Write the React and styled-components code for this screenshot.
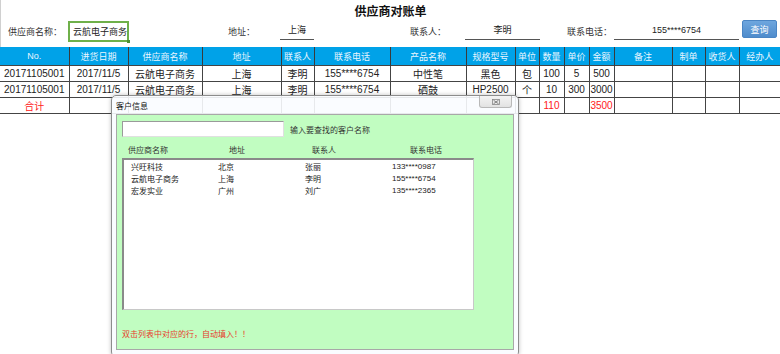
import React from "react";
import styled, { createGlobalStyle } from "styled-components";

const Global = createGlobalStyle`
  html, body { margin: 0; padding: 0; background: #fff; }
  body { font-family: "Liberation Sans", "Noto Sans CJK SC", sans-serif; color: #222; }
`;

const Page = styled.div`
  position: relative;
  width: 780px;
  height: 354px;
  overflow: hidden;
  background: #fff;
`;

const Top = styled.div`
  height: 47px;
  border-left: 1px solid #d0d0d0;
  box-sizing: border-box;
`;

const Title = styled.div`
  height: 20px;
  display: flex;
  align-items: center;
  justify-content: center;
  padding-top: 1px;
  box-sizing: border-box;
  font-size: 12px;
  font-weight: bold;
  color: #111;
`;

const FormRow = styled.div`
  display: grid;
  grid-template-columns: 7px 60px 61px 99px 52px 34px 96px 55px 75px 27px 47px 125px 3px 35px;
  height: 22px;
  align-items: center;
  font-size: 9px;
  color: #333;
`;

const Label = styled.span`
  grid-column: ${(p) => p.col};
  white-space: nowrap;
`;

const GreenInput = styled.div`
  grid-column: 3;
  position: relative;
  height: 21px;
  box-sizing: border-box;
  border: 2px solid #6fb04a;
  display: flex;
  align-items: center;
  padding-left: 3px;
  color: #222;
  white-space: nowrap;
  &::after {
    content: "";
    position: absolute;
    right: -3px;
    bottom: -3px;
    width: 3px;
    height: 3px;
    background: #4f8f33;
  }
`;

const LineField = styled.div`
  grid-column: ${(p) => p.col};
  align-self: start;
  height: 20px;
  box-sizing: border-box;
  border-bottom: 1px solid #555;
  display: flex;
  align-items: center;
  justify-content: center;
  color: #222;
  white-space: nowrap;
`;

const QueryButton = styled.button`
  grid-column: 14;
  align-self: start;
  height: 18px;
  padding: 0;
  border: 1px solid #4a85c4;
  border-radius: 2px;
  background: linear-gradient(#6ea6de, #4f8ccc);
  color: #fff;
  font-family: inherit;
  font-size: 9px;
`;

const Table = styled.table`
  border-collapse: collapse;
  table-layout: fixed;
  width: 780px;
`;

const HeadCell = styled.th`
  height: 18px;
  padding: 0;
  background: #00a2e8;
  color: #eaf6ff;
  font-weight: normal;
  font-size: 9px;
  border-left: 1px solid #3a3a3a;
  border-right: 1px solid #3a3a3a;
  &:first-child { border-left: none; }
  &:last-child { border-right: none; }
  white-space: nowrap;
  overflow: hidden;
`;

const Cell = styled.td`
  height: ${(p) => p.h || 14}px;
  padding: 0;
  text-align: center;
  font-size: 10px;
  color: ${(p) => (p.red ? "#ff2020" : "#222")};
  border: 1px solid #444;
  &:first-child { border-left: none; }
  &:last-child { border-right: none; }
  white-space: nowrap;
  overflow: hidden;
`;

const Dialog = styled.div`
  position: absolute;
  left: 111px;
  top: 95px;
  width: 408px;
  height: 262px;
  box-sizing: border-box;
  border: 1px solid #8c8c8c;
  border-radius: 5px;
  background: rgba(250, 252, 255, 0.9);
  box-shadow: 0 0 4px rgba(0, 0, 0, 0.25);
  display: flex;
  flex-direction: column;
  padding: 0 4px;
`;

const TitleBar = styled.div`
  height: 18px;
  display: flex;
  align-items: center;
  justify-content: space-between;
  font-size: 8px;
  color: #111;
`;

const CloseBtn = styled.div`
  width: 31px;
  height: 11px;
  margin-top: -6px;
  margin-right: 2px;
  border: 1px solid #b8b8b8;
  border-top: none;
  border-radius: 0 0 3px 3px;
  background: linear-gradient(#f4f4f4, #e2e2e2);
  display: flex;
  align-items: center;
  justify-content: center;
`;

const Body = styled.div`
  background: #c1fdc1;
  border: 1px solid #a8a8a8;
  height: 236px;
  box-sizing: border-box;
  display: flex;
  flex-direction: column;
  padding: 6px 0 0 5px;
  font-size: 8px;
  color: #333;
`;

const SearchRow = styled.div`
  display: flex;
  align-items: center;
  gap: 6px;
`;

const SearchInput = styled.div`
  width: 162px;
  height: 16px;
  box-sizing: border-box;
  background: #fff;
  border: 1px solid #9a9a9a;
  border-right-color: #e0e0e0;
  border-bottom-color: #e0e0e0;
`;

const ColumnHeads = styled.div`
  display: grid;
  grid-template-columns: 101px 83px 98px auto;
  padding-left: 6px;
  margin-top: 4px;
  height: 17px;
  align-items: center;
  color: #333;
`;

const ListBox = styled.div`
  width: 352px;
  height: 152px;
  box-sizing: border-box;
  background: #fff;
  border: 1px solid #c8c8c8;
  border-top: 2px solid #8a8a8a;
  border-left: 2px solid #8a8a8a;
  padding-top: 0;
`;

const ListRow = styled.div`
  display: grid;
  grid-template-columns: 87px 87px 87px auto;
  padding-left: 7px;
  height: 12px;
  align-items: center;
  color: #222;
  white-space: nowrap;
`;

const Hint = styled.div`
  margin-top: 18px;
  color: #e83a2a;
  font-size: 8px;
`;

const cols = [69, 59, 74, 79, 33, 76, 76, 49, 24, 25, 25, 25, 58, 33, 34, 41];
const heads = ["No.", "进货日期", "供应商名称", "地址", "联系人", "联系电话", "产品名称", "规格型号", "单位", "数量", "单价", "金额", "备注", "制单", "收货人", "经办人"];
const rows = [
  ["20171105001", "2017/11/5", "云航电子商务", "上海", "李明", "155****6754", "中性笔", "黑色", "包", "100", "5", "500", "", "", "", ""],
  ["20171105001", "2017/11/5", "云航电子商务", "上海", "李明", "155****6754", "硒鼓", "HP2500", "个", "10", "300", "3000", "", "", "", ""],
];
const totals = ["合计", "", "", "", "", "", "", "", "", "110", "", "3500", "", "", "", ""];

const customers = [
  ["兴旺科技", "北京", "张丽", "133****0987"],
  ["云航电子商务", "上海", "李明", "155****6754"],
  ["宏发实业", "广州", "刘广", "135****2365"],
];

export default function App() {
  return (
    <Page>
      <Global />
      <Top>
        <Title>供应商对账单</Title>
        <FormRow>
          <Label col={2}>供应商名称：</Label>
          <GreenInput>云航电子商务</GreenInput>
          <Label col={5}>地址：</Label>
          <LineField col={6}>上海</LineField>
          <Label col={8}>联系人：</Label>
          <LineField col={9}>李明</LineField>
          <Label col={11}>联系电话：</Label>
          <LineField col={12}>155****6754</LineField>
          <QueryButton>查询</QueryButton>
        </FormRow>
      </Top>
      <Table>
        <colgroup>
          {cols.map((w, i) => (
            <col key={i} style={{ width: w }} />
          ))}
        </colgroup>
        <thead>
          <tr>
            {heads.map((h) => (
              <HeadCell key={h}>{h}</HeadCell>
            ))}
          </tr>
        </thead>
        <tbody>
          {rows.map((r, i) => (
            <tr key={i}>
              {r.map((c, j) => (
                <Cell key={j} h={14}>{c}</Cell>
              ))}
            </tr>
          ))}
          <tr>
            {totals.map((c, j) => (
              <Cell key={j} h={13} red>{c}</Cell>
            ))}
          </tr>
        </tbody>
      </Table>
      <Dialog>
        <TitleBar>
          <span>客户信息</span>
          <CloseBtn>
            <svg width="8" height="6" viewBox="0 0 8 6">
              <rect x="0.5" y="0.5" width="7" height="5" fill="none" stroke="#888" strokeWidth="0.8" />
              <path d="M1.5 1.2 L6.5 4.8 M6.5 1.2 L1.5 4.8" stroke="#777" strokeWidth="0.9" />
            </svg>
          </CloseBtn>
        </TitleBar>
        <Body>
          <SearchRow>
            <SearchInput />
            <span>输入要查找的客户名称</span>
          </SearchRow>
          <ColumnHeads>
            <span>供应商名称</span>
            <span>地址</span>
            <span>联系人</span>
            <span>联系电话</span>
          </ColumnHeads>
          <ListBox>
            {customers.map((c) => (
              <ListRow key={c[0]}>
                {c.map((v, i) => (
                  <span key={i}>{v}</span>
                ))}
              </ListRow>
            ))}
          </ListBox>
          <Hint>双击列表中对应的行，自动填入！！</Hint>
        </Body>
      </Dialog>
    </Page>
  );
}
